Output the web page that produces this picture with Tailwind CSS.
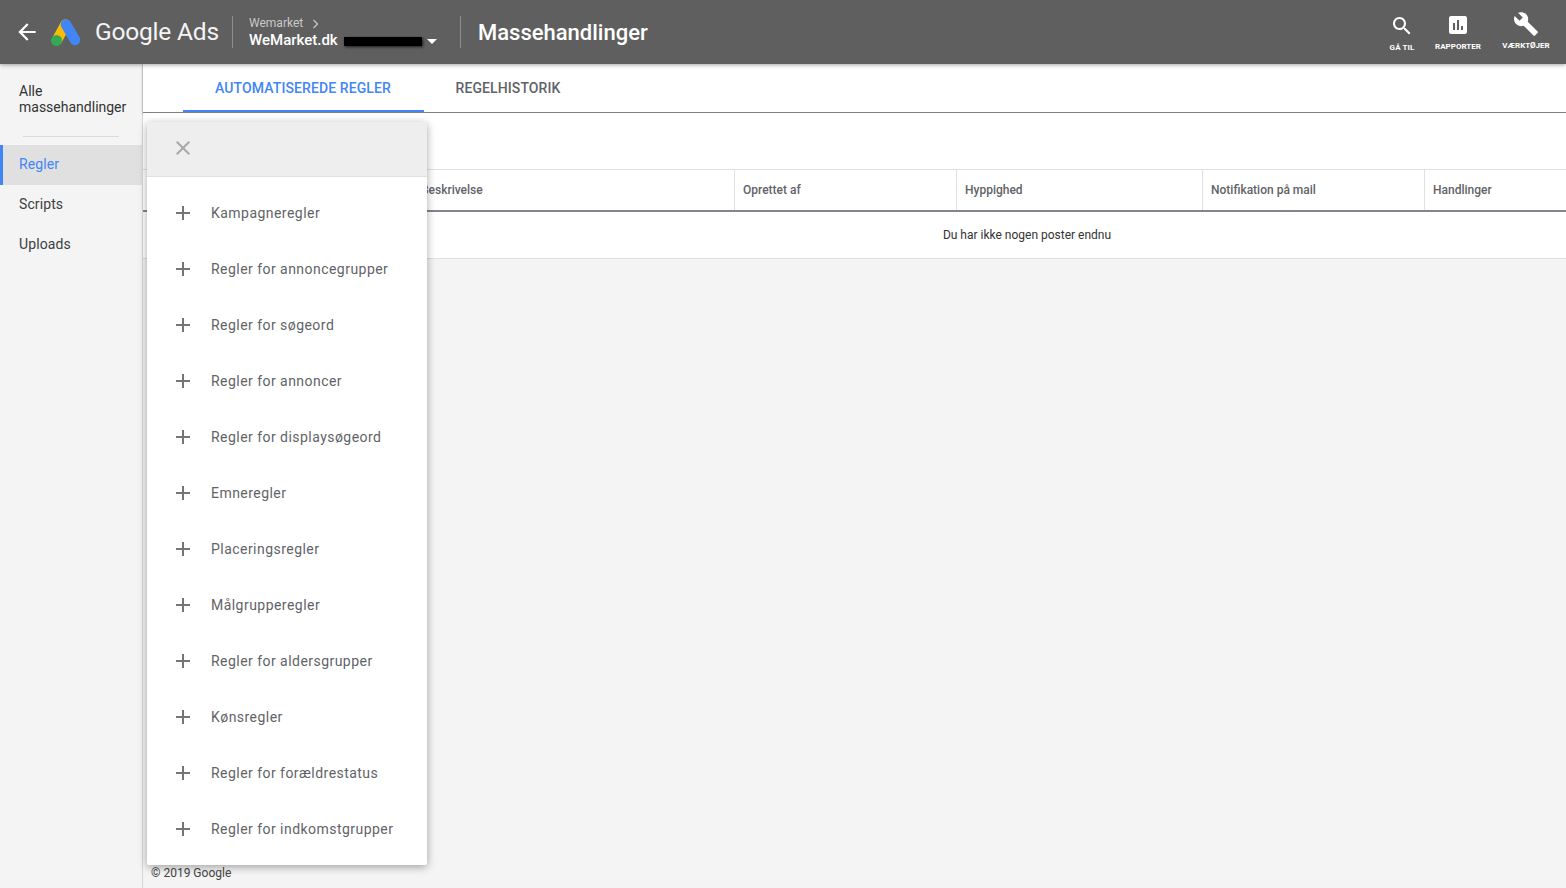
<!DOCTYPE html>
<html lang="da">
<head>
  <meta charset="UTF-8">
  <title>Massehandlinger</title>
  <script src="https://cdn.jsdelivr.net/npm/@tailwindcss/browser@4"></script>
</head>
<body class="font-[Roboto,sans-serif] bg-[#f4f4f4] h-[888px] w-[1566px] overflow-hidden flex flex-col">
  <!-- top bar -->
  <header class="relative z-10 h-[64px] bg-[#5f5f5f] flex items-center text-white shadow-[0_1px_4px_rgba(0,0,0,0.35)] shrink-0">
    <svg class="ml-[14px] w-[26px] h-[26px] fill-white" viewBox="0 0 24 24"><path d="M20 11H7.83l5.59-5.59L12 4l-8 8 8 8 1.41-1.41L7.83 13H20v-2z"/></svg>
    <svg class="ml-[10px] w-[32px] h-[30px]" viewBox="0 0 32 30">
      <line x1="15.5" y1="7.5" x2="7" y2="23" stroke="#fbbc04" stroke-width="10.5" stroke-linecap="round"/>
      <line x1="16" y1="7.5" x2="25" y2="23" stroke="#4285f4" stroke-width="10.5" stroke-linecap="round"/>
      <circle cx="6.5" cy="23.5" r="5.5" fill="#34a853"/>
    </svg>
    <div class="ml-[13px] text-[24.5px] leading-none w-[123px] whitespace-nowrap tracking-[-0.2px] text-[#f4f4f4]">Google Ads</div>
    <div class="ml-[14px] w-px h-[32px] bg-[#8c8c8c]"></div>
    <div class="ml-[16px] w-[189px] mt-[1px]">
      <div class="flex items-center text-[12px] leading-[15px] text-[#c9c9c9]">Wemarket
        <svg class="ml-[9px] w-[8px] h-[10px]" viewBox="0 0 8 10"><path d="M1.5 1l4 4-4 4" fill="none" stroke="#c9c9c9" stroke-width="1.2"/></svg>
      </div>
      <div class="flex items-center text-[15px] leading-[18px] font-medium">WeMarket.dk
        <div class="ml-[6px] w-[78px] h-[9px] mt-[2px] bg-black shadow-[1px_1px_3px_rgba(0,0,0,0.7)]"></div>
        <div class="ml-[5px] mt-[3px] w-0 h-0 border-x-[5px] border-x-transparent border-t-[5px] border-t-white"></div>
      </div>
    </div>
    <div class="ml-[22px] w-px h-[32px] bg-[#8c8c8c]"></div>
    <div class="ml-[17px] mt-[1px] text-[22px] font-medium leading-none">Massehandlinger</div>
    <nav class="ml-auto mt-[2px] flex items-start text-[8px] font-bold leading-none">
      <div class="flex flex-col items-center w-[26px]">
        <svg class="w-[24px] h-[24px] fill-white" viewBox="0 0 24 24"><path d="M15.5 14h-.79l-.28-.27C15.41 12.59 16 11.11 16 9.5 16 5.91 13.09 3 9.5 3S3 5.91 3 9.5 5.91 16 9.5 16c1.61 0 3.09-.59 4.23-1.57l.27.28v.79l5 4.99L20.49 19l-4.99-5zm-6 0C7.01 14 5 11.99 5 9.5S7.01 5 9.5 5 14 7.01 14 9.5 11.99 14 9.5 14z"/></svg>
        <span class="mt-[6px] tracking-[0.1px]">GÅ TIL</span>
      </div>
      <div class="flex flex-col items-center w-[48px] ml-[19px]">
        <svg class="w-[24px] h-[24px] -mt-[1px] fill-white" viewBox="0 0 24 24"><path d="M19 3H5c-1.1 0-2 .9-2 2v14c0 1.1.9 2 2 2h14c1.1 0 2-.9 2-2V5c0-1.1-.9-2-2-2zM9 17H7v-7h2v7zm4 0h-2V7h2v10zm4 0h-2v-4h2v4z"/></svg>
        <span class="mt-[6px]">RAPPORTER</span>
      </div>
      <div class="flex flex-col items-center w-[50px] ml-[19px] mr-[15px]">
        <svg class="w-[26px] h-[26px] -mt-[3px] fill-white" viewBox="0 0 24 24"><path d="M22.7 19l-9.1-9.1c.9-2.3.4-5-1.5-6.9-2-2-5-2.4-7.4-1.3L9 6 6 9 1.6 4.7C.4 7.1.9 10.1 2.9 12.1c1.9 1.9 4.6 2.4 6.9 1.5l9.1 9.1c.4.4 1 .4 1.4 0l2.3-2.3c.5-.4.5-1.1.1-1.4z"/></svg>
        <span class="mt-[5px]">VÆRKTØJER</span>
      </div>
    </nav>
  </header>

  <div class="flex flex-1 min-h-0">
    <!-- side nav -->
    <aside class="w-[143px] shrink-0 border-r border-[#d6d6d6] text-[14px] text-[#3c4043]">
      <div class="pl-[19px] pt-[19px] leading-[16px] text-[#333]">Alle<br>massehandlinger</div>
      <div class="mx-[23px] mt-[21px] mb-[8px] h-px bg-[#dadada]"></div>
      <div class="h-[40px] flex items-center pb-[2px] pl-[16px] border-l-[3px] border-[#4285f4] bg-[#e0e0e0] text-[#4285f4] tracking-[0.1px]">Regler</div>
      <div class="h-[40px] flex items-center pb-[2px] pl-[19px] tracking-[0.1px]">Scripts</div>
      <div class="h-[40px] flex items-center pb-[2px] pl-[19px] tracking-[0.1px]">Uploads</div>
    </aside>

    <main class="relative flex-1 flex flex-col">
      <!-- tabs -->
      <div class="h-[49px] pl-[40px] flex bg-white border-b border-[#808080] text-[14px] font-medium tracking-[0.1px] shadow-[0_1px_3px_rgba(0,0,0,0.25)]">
        <div class="w-[241px] h-[48px] flex items-center justify-center pt-[2px] pr-[1px] text-[#4285f4] border-b-2 border-[#4285f4]">AUTOMATISEREDE REGLER</div>
        <div class="w-[170px] h-[48px] flex items-center justify-center pr-[2px] text-[#5f6368]">REGELHISTORIK</div>
      </div>
      <!-- table -->
      <div class="bg-white h-[56px]"></div>
      <div class="grid grid-cols-[268px_323px_222px_246px_222px_142px] h-[43px] bg-white border-y border-[#e0e0e0] border-b-2 border-b-[#80868b] text-[12px] font-medium text-[#5f6368]">
        <div></div>
        <div class="flex items-center pl-[10px]">Beskrivelse</div>
        <div class="flex items-center pl-[8px] border-l border-[#e0e0e0]">Oprettet af</div>
        <div class="flex items-center pl-[8px] border-l border-[#e0e0e0]">Hyppighed</div>
        <div class="flex items-center pl-[8px] border-l border-[#e0e0e0]">Notifikation på mail</div>
        <div class="flex items-center pl-[8px] border-l border-[#e0e0e0]">Handlinger</div>
      </div>
      <div class="h-[47px] pl-[345px] bg-white border-b border-[#e0e0e0] flex items-center justify-center text-[12px] text-[#333]">Du har ikke nogen poster endnu</div>
      <div class="mt-auto pl-[8px] pb-[8px] text-[12px] leading-[14px] text-[#444]">© 2019 Google</div>

      <!-- new rule menu -->
      <div class="absolute left-[4px] top-[58px] w-[280px] h-[743px] bg-white rounded-[2px] shadow-[0_2px_8px_rgba(0,0,0,0.35)] text-[14px] tracking-[0.46px] text-[#5f6368]">
        <div class="h-[55px] bg-[#eeeeee] border-b border-[#e0e0e0] flex items-center pb-[2px] pl-[24px]">
          <svg class="w-[24px] h-[24px] fill-[#a8a8a8]" viewBox="0 0 24 24"><path d="M19 6.41L17.59 5 12 10.59 6.41 5 5 6.41 10.59 12 5 17.59 6.41 19 12 13.41 17.59 19 19 17.59 13.41 12z"/></svg>
        </div>
        <ul class="py-[8px]">
          <li class="h-[56px] flex items-center pl-[24px]"><svg class="w-[24px] h-[24px] fill-[#757575] mr-[16px]" viewBox="0 0 24 24"><path d="M19 13h-6v6h-2v-6H5v-2h6V5h2v6h6v2z"/></svg>Kampagneregler</li>
          <li class="h-[56px] flex items-center pl-[24px]"><svg class="w-[24px] h-[24px] fill-[#757575] mr-[16px]" viewBox="0 0 24 24"><path d="M19 13h-6v6h-2v-6H5v-2h6V5h2v6h6v2z"/></svg>Regler for annoncegrupper</li>
          <li class="h-[56px] flex items-center pl-[24px]"><svg class="w-[24px] h-[24px] fill-[#757575] mr-[16px]" viewBox="0 0 24 24"><path d="M19 13h-6v6h-2v-6H5v-2h6V5h2v6h6v2z"/></svg>Regler for søgeord</li>
          <li class="h-[56px] flex items-center pl-[24px]"><svg class="w-[24px] h-[24px] fill-[#757575] mr-[16px]" viewBox="0 0 24 24"><path d="M19 13h-6v6h-2v-6H5v-2h6V5h2v6h6v2z"/></svg>Regler for annoncer</li>
          <li class="h-[56px] flex items-center pl-[24px]"><svg class="w-[24px] h-[24px] fill-[#757575] mr-[16px]" viewBox="0 0 24 24"><path d="M19 13h-6v6h-2v-6H5v-2h6V5h2v6h6v2z"/></svg>Regler for displaysøgeord</li>
          <li class="h-[56px] flex items-center pl-[24px]"><svg class="w-[24px] h-[24px] fill-[#757575] mr-[16px]" viewBox="0 0 24 24"><path d="M19 13h-6v6h-2v-6H5v-2h6V5h2v6h6v2z"/></svg>Emneregler</li>
          <li class="h-[56px] flex items-center pl-[24px]"><svg class="w-[24px] h-[24px] fill-[#757575] mr-[16px]" viewBox="0 0 24 24"><path d="M19 13h-6v6h-2v-6H5v-2h6V5h2v6h6v2z"/></svg>Placeringsregler</li>
          <li class="h-[56px] flex items-center pl-[24px]"><svg class="w-[24px] h-[24px] fill-[#757575] mr-[16px]" viewBox="0 0 24 24"><path d="M19 13h-6v6h-2v-6H5v-2h6V5h2v6h6v2z"/></svg>Målgrupperegler</li>
          <li class="h-[56px] flex items-center pl-[24px]"><svg class="w-[24px] h-[24px] fill-[#757575] mr-[16px]" viewBox="0 0 24 24"><path d="M19 13h-6v6h-2v-6H5v-2h6V5h2v6h6v2z"/></svg>Regler for aldersgrupper</li>
          <li class="h-[56px] flex items-center pl-[24px]"><svg class="w-[24px] h-[24px] fill-[#757575] mr-[16px]" viewBox="0 0 24 24"><path d="M19 13h-6v6h-2v-6H5v-2h6V5h2v6h6v2z"/></svg>Kønsregler</li>
          <li class="h-[56px] flex items-center pl-[24px]"><svg class="w-[24px] h-[24px] fill-[#757575] mr-[16px]" viewBox="0 0 24 24"><path d="M19 13h-6v6h-2v-6H5v-2h6V5h2v6h6v2z"/></svg>Regler for forældrestatus</li>
          <li class="h-[56px] flex items-center pl-[24px]"><svg class="w-[24px] h-[24px] fill-[#757575] mr-[16px]" viewBox="0 0 24 24"><path d="M19 13h-6v6h-2v-6H5v-2h6V5h2v6h6v2z"/></svg>Regler for indkomstgrupper</li>
        </ul>
      </div>
    </main>
  </div>
</body>
</html>
